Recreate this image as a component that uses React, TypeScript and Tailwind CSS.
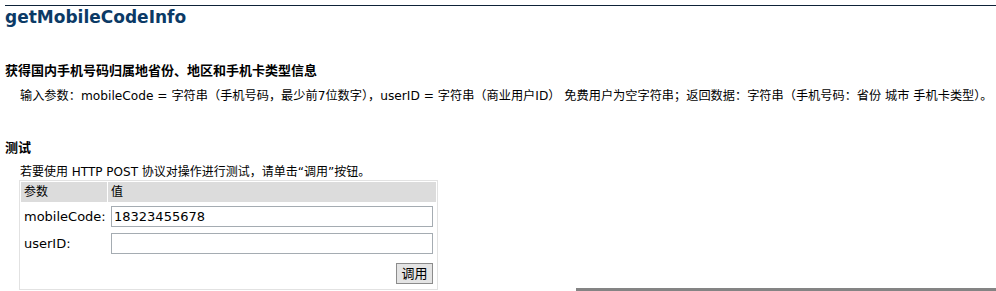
import React from "react";

const cjk = "font-['DejaVu_Sans','Noto_Sans_CJK_SC',sans-serif]";

export default function App() {
  return (
    <div className={`w-[996px] h-[291px] overflow-hidden bg-white text-black text-[12px] ${cjk} relative`}>
      {/* heading bar */}
      <div className="ml-[5px] mt-[5px] border-t border-[#0e2238]">
        <h1 className="pt-[2px] text-[17px] leading-[18px] font-bold text-[#0b3a66]">getMobileCodeInfo</h1>
      </div>

      <div className="mt-[37px] ml-[5px]">
        <h2 className="text-[13px] leading-[16px] font-bold">获得国内手机号码归属地省份、地区和手机卡类型信息</h2>
        <p className="mt-[9px] ml-[15px] leading-[16px] whitespace-nowrap text-[12.2px]">
          输入参数：mobileCode = 字符串（手机号码，最少前7位数字），userID = 字符串（商业用户ID） 免费用户为空字符串；返回数据：字符串（手机号码：省份 城市 手机卡类型）。
        </p>
      </div>

      <div className="mt-[36px] ml-[5px]">
        <h3 className="text-[13px] leading-[16px] font-bold">测试</h3>
        <p className="mt-[8px] ml-[15px] leading-[16px]">若要使用 HTTP POST 协议对操作进行测试，请单击“调用”按钮。</p>

        <div className="ml-[14px] w-[419px] border border-[#e2e2e2] p-px">
          <div className="grid grid-cols-[86px_1fr] gap-x-px">
            <div className="bg-[#dcdcdc] h-[20px] leading-[20px] px-[3px]">参数</div>
            <div className="bg-[#dcdcdc] h-[20px] leading-[20px] px-[3px]">值</div>

            <div className="h-[27px] flex items-center px-[3px] pt-[2px] text-[13px]">mobileCode:</div>
            <div className="h-[27px] flex items-center pl-[3px] pr-[3px] pt-[2px]">
              <input
                readOnly
                value="18323455678"
                className="w-full h-[21px] border border-[#a5acb2] px-[2px] text-[13px] outline-none"
              />
            </div>

            <div className="h-[29px] flex items-center px-[3px] text-[13px]">userID:</div>
            <div className="h-[29px] flex items-center pl-[3px] pr-[3px]">
              <input readOnly className="w-full h-[21px] border border-[#a5acb2] px-[2px] text-[13px] outline-none" />
            </div>

            <div className="h-[30px]" />
            <div className="h-[30px] flex items-center justify-end pr-[3px]">
              <button className="w-[37px] h-[21px] bg-[#e4e4e4] border border-[#8c8c8c] text-[13px] leading-none">调用</button>
            </div>
          </div>
        </div>
      </div>

      <div className="absolute left-[576px] right-0 bottom-0 h-[3px] bg-[#848484]" />
    </div>
  );
}
